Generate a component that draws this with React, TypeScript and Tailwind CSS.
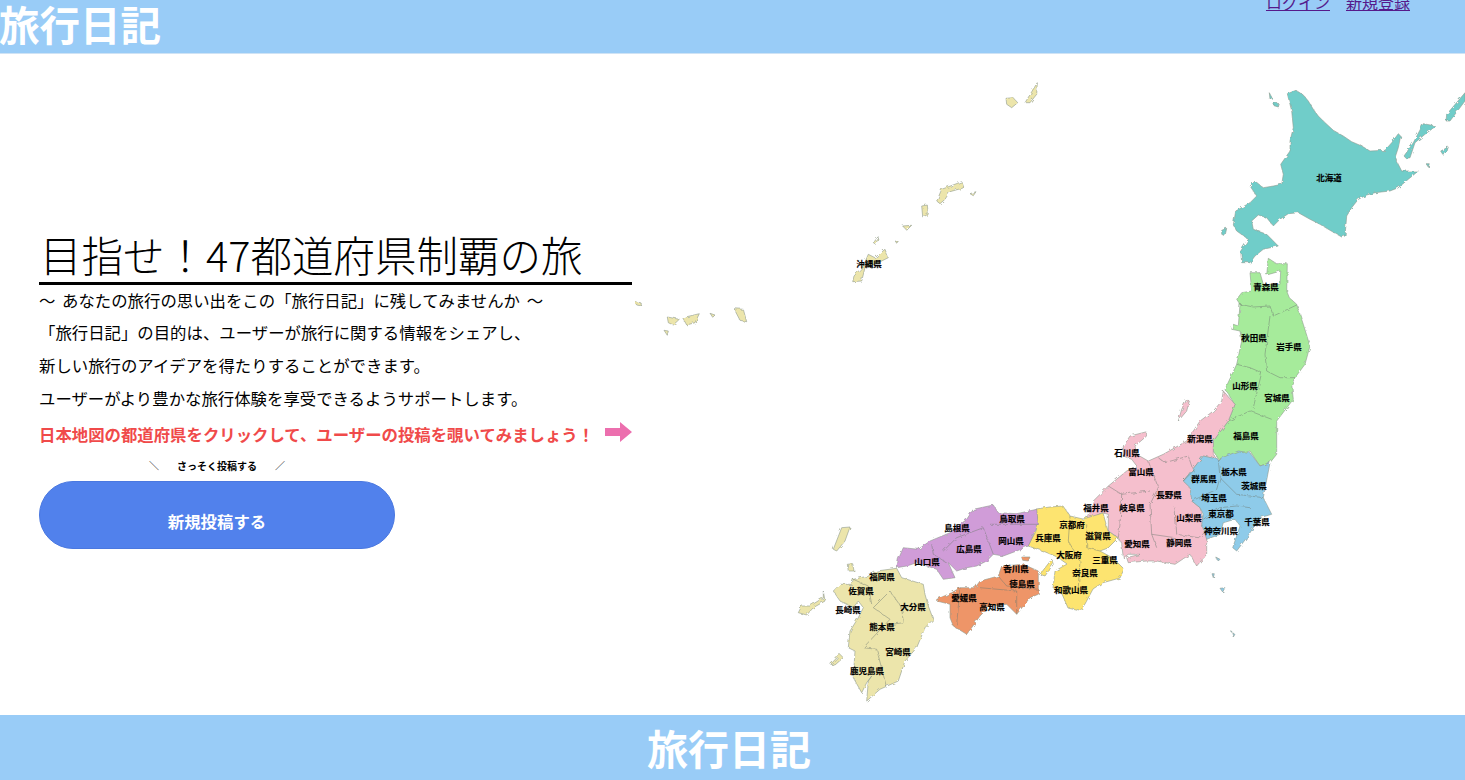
const P = (ox: number, oy: number, s: string) =>
  s.trim().split(/\s+/).map((p) => {
    const [x, y] = p.split(",").map(Number);
    return `${(ox + x / 3).toFixed(1)},${(oy + y / 3).toFixed(1)}`;
  }).join(" ");
const Z2 = (s: string) => P(1050, 70, s);
const Z3 = (s: string) => P(1050, 390, s);
const Z4 = (s: string) => P(790, 490, s);
const Z5 = (s: string) => P(630, 70, s);

const TEAL = "#70cdc9", GREEN = "#a6eb9b", PINK = "#f5bfcd", BLUE = "#8ecbe9", YEL = "#fde470", PUR = "#d09cd8", ORG = "#ee9568", SAND = "#ece5ab";

const shapes: [string, string][] = [
  [TEAL, Z2("712,68 738,58 760,72 775,90 790,115 805,135 820,150 850,178 880,195 905,212 935,225 960,240 1005,238 1025,215 1045,188 1052,195 1045,230 1035,260 1045,280 1055,300 1105,300 1075,325 1045,350 1020,360 975,365 950,372 925,385 905,410 890,435 885,495 875,498 840,478 810,460 780,445 745,425 715,428 690,445 670,465 650,440 625,432 605,450 610,475 650,490 685,525 640,535 615,555 600,575 575,575 572,540 595,505 560,480 550,462 557,420 600,395 620,375 600,345 615,330 640,350 670,345 695,340 700,310 692,280 720,240 720,210 730,170 725,120")],
  [TEAL, Z2("658,65 666,80 660,85")],
  [TEAL, Z2("672,95 688,98 685,108 672,104")],
  [TEAL, Z2("515,478 530,472 525,495 515,490")],
  [TEAL, Z2("1062,255 1090,215 1120,158 1158,165 1125,190 1095,215 1080,260 1068,262")],
  [TEAL, Z2("1188,150 1190,130 1245,65 1245,90 1200,150")],
  [TEAL, Z2("1172,240 1195,228 1190,245 1178,250")],
  [TEAL, Z2("1128,278 1138,278 1135,288")],
  [GREEN, `${Z2("655,562 680,578 712,578 710,660 718,680 740,700 760,760 780,825 765,880 735,920 725,940 730,985")} ${Z3("680,90 680,190 660,215 630,225 600,180 565,195 505,205 490,180 490,150 535,90 555,40")} ${Z2("525,955 560,880 575,810 570,780 545,775 550,760 565,765 570,700 560,685 575,665 605,660 600,605 630,605 640,640 690,640 692,600 650,612")}`],
  [PINK, Z3("520,0 555,40 535,90 490,150 490,190 500,205 460,195 400,270 425,290 425,330 450,350 460,385 470,440 470,490 440,525 420,490 375,520 320,510 290,510 235,515 230,500 270,490 235,490 220,500 215,460 205,440 175,420 175,370 155,365 105,395 130,330 175,285 230,240 260,225 245,205 220,195 220,165 240,135 290,122 290,135 255,165 260,190 295,210 340,190 410,150 450,90 490,60 515,30")],
  [PINK, Z3("410,25 418,30 410,60 385,90 395,55")],
  [BLUE, Z3("400,270 460,195 505,205 565,180 600,185 630,225 660,215 640,320 665,370 630,380 590,440 560,480 548,470 570,405 555,385 520,395 510,430 470,445 455,400 460,370 450,350 425,330 420,290")],
  [BLUE, Z3("497,498 510,505 505,510")],
  [BLUE, Z3("486,548 493,548 490,560")],
  [BLUE, Z3("510,592 525,590 518,603")],
  [BLUE, Z3("545,722 555,730 550,738")],
  [YEL, "1036,508 1050,506 1063,505 1070,515 1083,518 1103,512 1108,530 1118,537 1108,547 1100,550 1113,557 1124,568 1120,577 1102,582 1093,588 1085,603 1080,610 1068,607 1062,593 1053,587 1055,570 1067,563 1060,558 1055,555 1043,550 1028,545 1036,530 1038,523"],
  [YEL, Z4("785,205 750,250 765,255 790,220")],
  [PUR, Z4("325,205 340,170 385,175 420,150 480,125 530,85 550,55 610,42 625,65 680,68 740,55 745,100 715,165 680,180 640,195 610,190 590,210 560,225 530,230 500,240 475,215 495,260 460,265 440,235 380,215 350,225 320,230")],
  [ORG, Z4("440,325 485,305 510,290 555,290 570,270 625,255 635,225 700,220 745,240 745,310 720,320 680,370 650,340 600,345 570,375 545,410 530,430 490,405 480,380 480,340 440,330")],
  [ORG, Z4("695,198 720,198 715,210 698,208")],
  [SAND, Z4("235,255 260,240 320,232 335,260 400,280 405,310 415,345 430,385 405,410 380,470 345,510 325,570 270,595 230,630 235,570 245,555 230,575 215,605 190,560 195,480 175,470 180,420 205,380 220,350 205,330 190,350 150,330 130,300 150,280 185,280 190,265")],
  [SAND, Z4("25,365 35,345 60,345 100,320 100,300 105,330 70,350 50,372")],
  [SAND, Z4("130,175 155,110 180,108 165,150 140,180")],
  [SAND, Z4("172,220 188,218 192,240 175,240")],
  [SAND, Z4("122,520 150,490 160,500 135,522")],
  [SAND, Z5("1128,82 1150,80 1163,95 1145,110 1130,100")],
  [SAND, Z5("1185,95 1222,35 1220,70 1200,95")],
  [SAND, Z5("920,390 935,355 995,332 1002,350 960,362 945,385 930,398")],
  [SAND, Z5("875,405 892,402 895,430 878,438")],
  [SAND, Z5("1020,368 1038,362 1030,374")],
  [SAND, Z5("818,465 845,463 830,478")],
  [SAND, Z5("730,515 745,497 738,520")],
  [SAND, Z5("796,510 805,510 800,517")],
  [SAND, Z5("668,632 672,615 700,585 715,550 735,560 765,535 775,560 745,575 705,590 695,630")],
  [SAND, Z5("14,692 32,695 35,705 20,702")],
  [SAND, Z5("112,738 148,745 130,762 115,755")],
  [SAND, Z5("158,740 208,728 195,755 170,762")],
  [SAND, Z5("240,727 255,732 248,739")],
  [SAND, Z5("312,713 340,715 350,752 330,748")],
  [SAND, Z5("102,778 115,780 112,793")],
];

const borders = [
  Z2("570,700 610,708 660,705 670,735 740,702"), Z2("660,735 645,850 650,900 690,920 735,920"), Z2("560,880 600,890 635,905 610,1010"),
  Z3("535,90 600,60 665,85"), Z3("505,205 510,260 560,310 640,320"), Z3("460,385 510,350 560,345 600,350"), Z3("425,330 500,295 510,260"),
  Z3("295,210 325,290 300,340 305,430 320,470"), Z3("175,285 215,310 300,300"), Z3("215,310 210,400 205,440"), Z3("325,200 345,215 415,195 430,240 400,270"),
  Z3("375,350 380,430 445,440 470,420"), Z3("305,430 375,440"), Z3("60,375 55,450 90,510 85,590"), Z3("110,400 110,470 150,480"),
  Z4("425,160 430,190 470,215"), Z4("460,180 500,140 580,110 610,190"), Z4("600,100 620,100 745,100"),
  Z4("510,290 500,400"), Z4("570,290 680,300 680,370"), Z4("625,255 650,285 745,295"),
  Z4("300,300 250,350 300,385 220,470 260,475 290,590"), Z4("300,300 335,350 340,395 305,400"), Z4("190,265 235,285 245,340"),
];

const labels: [string, number, number][] = [
  ["北海道",1329,177],["青森県",1266,286],["秋田県",1254,337],["岩手県",1289,346],["山形県",1245,385],["宮城県",1277,397],
  ["福島県",1246,435],["新潟県",1200,438],["石川県",1127,452],["富山県",1141,471],["栃木県",1234,471],["群馬県",1204,478],
  ["茨城県",1254,485],["長野県",1169,494],["埼玉県",1214,497],["福井県",1096,507],["岐阜県",1132,507],["山梨県",1189,517],
  ["東京都",1221,513],["千葉県",1257,521],["京都府",1072,524],["滋賀県",1098,535],["神奈川県",1221,530],["愛知県",1137,543],
  ["静岡県",1179,542],["大阪府",1069,554],["三重県",1105,559],["奈良県",1085,572],["和歌山県",1071,589],["鳥取県",1012,518],
  ["島根県",957,527],["兵庫県",1048,537],["岡山県",1011,540],["広島県",969,548],["山口県",927,561],["香川県",1016,568],
  ["福岡県",882,576],["徳島県",1022,583],["佐賀県",861,590],["愛媛県",964,597],["長崎県",848,609],["高知県",992,606],
  ["大分県",913,606],["熊本県",882,626],["宮崎県",898,651],["鹿児島県",867,670],["沖縄県",869,263],
];

function JapanMap() {
  return (
    <svg viewBox="635 53 830 662" className="w-[830px] h-[662px] shrink-0">
      <defs>
        <filter id="coast" x="-5%" y="-5%" width="110%" height="110%">
          <feTurbulence type="fractalNoise" baseFrequency="0.22" numOctaves="2" seed="4" result="n" />
          <feDisplacementMap in="SourceGraphic" in2="n" scale="3.5" result="d" />
          <feGaussianBlur in="d" stdDeviation="0.3" />
        </filter>
      </defs>
      <g filter="url(#coast)">
        {shapes.map(([c, p], i) => (
          <polygon key={i} points={p} fill={c} stroke="#8f9a8f" strokeWidth="0.6" strokeLinejoin="round" />
        ))}
        {borders.map((p, i) => (
          <polyline key={i} points={p} fill="none" stroke="#707a72" strokeWidth="0.6" opacity="0.8" />
        ))}
      </g>
      <rect x="635" y="301" width="3" height="2" fill="#e6dfa8" />
      <g className="text-[8.5px] font-bold" fill="#000" stroke="#000" strokeWidth="0.15" textAnchor="middle" dominantBaseline="central" transform="translate(0 -1.5)">
        {labels.map(([t, x, y]) => (
          <text key={t} x={x} y={y}>{t}</text>
        ))}
      </g>
    </svg>
  );
}

export default function App() {
  return (
    <div className="w-[1465px] h-[780px] flex flex-col overflow-hidden bg-white text-black font-['Noto_Sans_CJK_JP','Noto_Sans',sans-serif]">
      <header className="h-[54px] shrink-0 bg-[#99ccf7] border-b border-[#cfe3f5] flex justify-between overflow-hidden">
        <h1 className="text-[40.5px] leading-[48px] font-bold text-white -ml-[1px] whitespace-nowrap">旅行日記</h1>
        <nav className="flex gap-4 mr-[55px] -mt-[10px] text-base leading-6 h-6 text-[#551a8b]">
          <a href="#" className="underline">ログイン</a>
          <a href="#" className="underline">新規登録</a>
        </nav>
      </header>
      <main className="flex-1 min-h-0 flex justify-between">
        <section className="w-[593px] ml-[39px] pt-[172px]">
          <h2 className="text-[41.5px] leading-[56px] font-light pl-[1px] border-b-[3px] border-black whitespace-nowrap">目指せ！47都道府県制覇の旅</h2>
          <p className="text-[16.4px] leading-[31px] whitespace-nowrap [word-spacing:3px]">〜 あなたの旅行の思い出をこの「旅行日記」に残してみませんか 〜</p>
          <p className="text-[16.4px] leading-[33px] whitespace-nowrap">「旅行日記」の目的は、ユーザーが旅行に関する情報をシェアし、</p>
          <p className="text-[16.4px] leading-[33px] whitespace-nowrap">新しい旅行のアイデアを得たりすることができます。</p>
          <p className="text-[16.4px] leading-[33px] whitespace-nowrap">ユーザーがより豊かな旅行体験を享受できるようサポートします。</p>
          <div className="flex items-center justify-between h-[34px] mt-[2px]">
            <p className="text-[16.4px] font-bold text-[#f04a4a] whitespace-nowrap">日本地図の都道府県をクリックして、ユーザーの投稿を覗いてみましょう！</p>
            <svg width="27" height="22" viewBox="0 0 27 22" className="shrink-0 -mt-[4px]">
              <polygon points="0,7 15,7 15,1 27,11 15,21 15,15 0,15" fill="#ec6fae" />
            </svg>
          </div>
          <div className="w-[356px] flex justify-center gap-[18px] text-[10px] leading-4 font-bold mt-[7px]">
            <span className="font-medium">＼</span>
            <span>さっそく投稿する</span>
            <span className="font-medium">／</span>
          </div>
          <button className="w-[356px] h-[68px] mt-[7px] pt-[12px] rounded-full bg-[#5181ec] border border-[#4a78e0] text-white text-[16.4px] font-bold">新規投稿する</button>
        </section>
        <JapanMap />
      </main>
      <footer className="h-[65px] shrink-0 bg-[#99ccf7] flex items-center justify-center pr-[7px] text-[41px] font-bold text-white">旅行日記</footer>
    </div>
  );
}
